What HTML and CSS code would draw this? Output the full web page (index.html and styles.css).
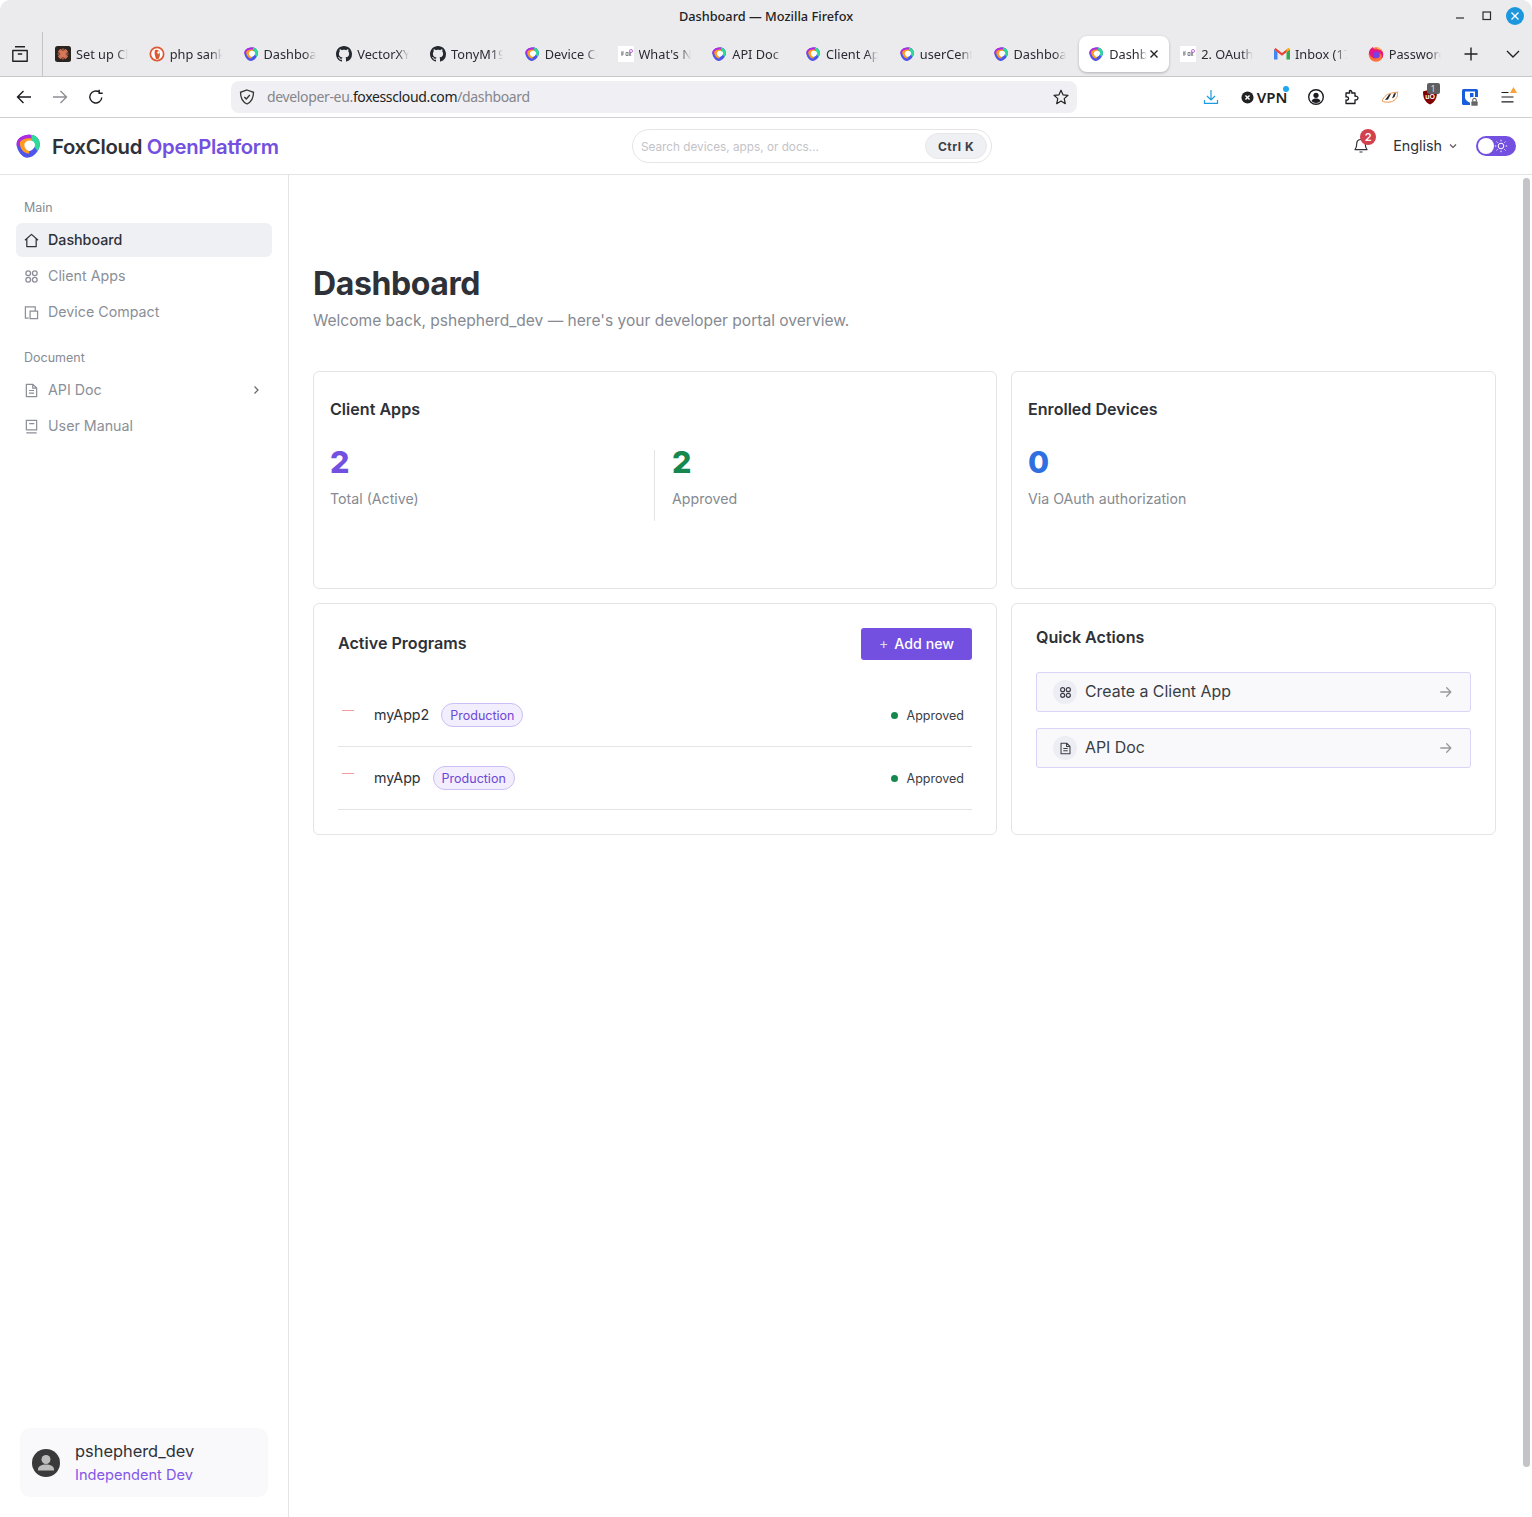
FILE: index.html
```html
<!DOCTYPE html>
<html lang="en">
<head>
  <meta charset="UTF-8">
  <meta name="viewport" content="width=device-width, initial-scale=1.0">
  <title>Dashboard</title>
  <link rel="stylesheet" href="styles.css">
</head>
<body>
  <svg class="sprite" aria-hidden="true">
    <symbol id="fox" viewBox="0 0 24 24">
      <path d="M12 .8C18.500 -.2 23.600 3.800 23.800 10 24 16.500 18 23.500 11.500 23.800 6 23.800 1.500 17 .6 11.500 0 6 5 1.800 12 .8Z" fill="#4f55ea"/>
      <path d="M1 12C-.5 6 4 1.700 12 .8 15 .4 18 1 20 3L17 7 7 5 3 12Z" fill="#b02be0"/>
      <path d="M15 .7C20 1 23.800 5 23.800 10 23.900 12 23 15 21.500 17L17 11Z" fill="#2fd99a"/>
      <path d="M4 8C6 5 11 3.500 16 4.500L13 19.500C8 20 3 14 4 8Z" fill="#ff9a1f"/>
      <path d="M13 6.500C16.500 6 19 8 19 10.800 19 14 16 17 13 17 10.500 16.500 8.500 14 8.300 11.300 8.200 8.800 10 7 13 6.500Z" fill="#fff"/>
    </symbol>
    <symbol id="github" viewBox="0 0 16 16">
      <path d="M8 0C3.580 0 0 3.580 0 8c0 3.540 2.290 6.530 5.470 7.590.4.070.55-.17.55-.38 0-.19-.01-.82-.01-1.490-2.010.37-2.530-.49-2.690-.94-.09-.23-.48-.94-.82-1.130-.28-.15-.68-.52-.01-.53.63-.01 1.080.58 1.230.82.72 1.210 1.870.87 2.330.66.070-.52.28-.87.51-1.070-1.780-.2-3.640-.89-3.640-3.950 0-.87.31-1.590.82-2.150-.08-.2-.36-1.020.08-2.120 0 0 .67-.21 2.200.82.64-.18 1.320-.27 2-.27.68 0 1.360.09 2 .27 1.530-1.040 2.200-.82 2.200-.82.44 1.100.16 1.920.08 2.120.51.56.82 1.270.82 2.150 0 3.070-1.870 3.750-3.650 3.950.29.25.54.73.54 1.480 0 1.070-.01 1.930-.01 2.200 0 .21.15.46.55.38A8.013 8.013 0 0016 8c0-4.420-3.580-8-8-8z" fill="#24292f"/>
    </symbol>
    <symbol id="foxdoc" viewBox="0 0 16 16">
      <rect width="16" height="16" fill="#fff"/>
      <path d="M3 8h3M3 6h3M4 6v4M8 6.500h2v3H8zM11 6l2 4M13 6l-2 4" stroke="#6a6a78" stroke-width=".8" fill="none"/>
      <circle cx="13" cy="5" r="1.500" fill="none" stroke="#b04bc8" stroke-width=".8"/>
    </symbol>
    <symbol id="apps" viewBox="0 0 16 16">
      <g fill="none" stroke="currentColor" stroke-width="1.400">
        <circle cx="4.500" cy="4.500" r="2.500"/><circle cx="11.500" cy="4.500" r="2.500"/>
        <circle cx="4.500" cy="11.500" r="2.500"/><circle cx="11.500" cy="11.500" r="2.500"/>
      </g>
    </symbol>
    <symbol id="doc" viewBox="0 0 16 16">
      <path d="M2.500 1.500h7L13.500 5.300v9.200h-11zM9.300 2v3.500h4M5.300 8h5.400M5.300 10.800h5.400" fill="none" stroke="currentColor" stroke-width="1.300" stroke-linejoin="round"/>
    </symbol>
    <symbol id="arrow" viewBox="0 0 16 16">
      <path d="M2 8h11.500M8.800 3.200 13.500 8 8.800 12.800" fill="none" stroke="currentColor" stroke-width="1.500" stroke-linecap="round" stroke-linejoin="round"/>
    </symbol>
  </svg>

  <div class="browser">
    <div class="titlebar">
      <span></span>
      <span class="window-title">Dashboard — Mozilla Firefox</span>
      <div class="window-controls">
        <svg class="ctl" viewBox="0 0 12 12"><path d="M1 8h8" stroke="#2b2b2b" stroke-width="1.200"/></svg>
        <svg class="ctl" viewBox="0 0 12 12"><rect x="2" y="2" width="7.500" height="7.500" fill="none" stroke="#2b2b2b" stroke-width="1.200"/></svg>
        <span class="ctl-close"><svg viewBox="0 0 12 12"><path d="M2.500 2.500l7 7M9.500 2.500l-7 7" stroke="#fff" stroke-width="1.400"/></svg></span>
      </div>
    </div>

    <div class="tabbar">
      <div class="tab-menu">
        <svg width="18" height="18" viewBox="0 0 18 18"><path d="M4 1.800h10M1.800 5.500h14.400v10.700H1.800zM6.800 9h4.400" fill="none" stroke="#222" stroke-width="1.400" stroke-linejoin="round"/></svg>
      </div>
      <div class="tabs">
        <div class="tab">
          <svg class="fav" viewBox="0 0 16 16"><rect width="16" height="16" rx="2.500" fill="#2b2320"/><path d="M8 2.500v11M2.500 8h11M4 4l8 8M12 4l-8 8M5.500 3l5 10M10.500 3l-5 10M3 5.500l10 5M13 5.500l-10 5" stroke="#d97757" stroke-width="1.200"/></svg>
          <span class="tab-label">Set up Claude</span>
        </div>
        <div class="tab">
          <svg class="fav" viewBox="0 0 16 16"><circle cx="8" cy="8" r="7.500" fill="#de5833"/><circle cx="8" cy="8" r="5.800" fill="#fff"/><path d="M6 4c3-1 5 1 5 4 0 2-1 4-1.500 5H7C6 10 5 7 6 4Z" fill="#de5833"/><circle cx="9.500" cy="6.500" r="1.200" fill="#fff"/><path d="M8 9l3-.8v1.400z" fill="#5cb85c"/></svg>
          <span class="tab-label">php sankey</span>
        </div>
        <div class="tab"><svg class="fav fav-fox"><use href="#fox"/></svg><span class="tab-label">Dashboard</span></div>
        <div class="tab"><svg class="fav"><use href="#github"/></svg><span class="tab-label">VectorXY</span></div>
        <div class="tab"><svg class="fav"><use href="#github"/></svg><span class="tab-label">TonyM19</span></div>
        <div class="tab"><svg class="fav fav-fox"><use href="#fox"/></svg><span class="tab-label">Device Compact</span></div>
        <div class="tab"><svg class="fav"><use href="#foxdoc"/></svg><span class="tab-label">What's New</span></div>
        <div class="tab"><svg class="fav fav-fox"><use href="#fox"/></svg><span class="tab-label">API Doc</span></div>
        <div class="tab"><svg class="fav fav-fox"><use href="#fox"/></svg><span class="tab-label">Client Apps</span></div>
        <div class="tab"><svg class="fav fav-fox"><use href="#fox"/></svg><span class="tab-label">userCenter</span></div>
        <div class="tab"><svg class="fav fav-fox"><use href="#fox"/></svg><span class="tab-label">Dashboard</span></div>
        <div class="tab tab-active">
          <svg class="fav fav-fox"><use href="#fox"/></svg>
          <span class="tab-label">Dashboard</span>
          <svg class="tab-close" viewBox="0 0 10 10"><path d="M1.500 1.500l7 7M8.500 1.500l-7 7" stroke="#222" stroke-width="1.400"/></svg>
        </div>
        <div class="tab"><svg class="fav"><use href="#foxdoc"/></svg><span class="tab-label">2. OAuth</span></div>
        <div class="tab">
          <svg class="fav" viewBox="0 0 16 16"><path d="M0 13.500V3.500l3.500 2.500V13.500z" fill="#4285f4"/><path d="M16 13.500V3.500L12.500 6V13.500z" fill="#34a853"/><path d="M0 3.500 1.500 2 8 7 14.500 2 16 3.500 8 9.800z" fill="#ea4335"/><path d="M12.500 6 16 3.500 14.500 2 12.500 3.500z" fill="#fbbc04"/></svg>
          <span class="tab-label">Inbox (17)</span>
        </div>
        <div class="tab">
          <svg class="fav" viewBox="0 0 16 16"><circle cx="8" cy="8.500" r="7.300" fill="#ff7139"/><path d="M1 7c0-3 2-5 4-6 0 1 .5 2 2 2.500C10 3 13 4 14.500 6c1 2 1 5-1 7C15 9 12 6 9 7 6 8 5 11 8 12.500 5 12.500 2 10.500 1 7Z" fill="#e31587"/><circle cx="8.500" cy="9" r="3.300" fill="#7542e5"/><path d="M10 1c1.500 1 3 2.200 4 4-2-1.500-3.500-2-5-2z" fill="#ffbd4f"/></svg>
          <span class="tab-label">Passwords</span>
        </div>
      </div>
      <div class="tab-tools">
        <svg width="14" height="14" viewBox="0 0 14 14"><path d="M7 .5v13M.5 7h13" stroke="#222" stroke-width="1.400"/></svg>
        <svg width="14" height="14" viewBox="0 0 14 14"><path d="M1 4l6 6 6-6" fill="none" stroke="#222" stroke-width="1.400"/></svg>
      </div>
    </div>

    <div class="navbar">
      <div class="nav-btns">
        <span class="nav-btn"><svg viewBox="0 0 16 16"><path d="M15 8H1.500M7.500 2 1.500 8l6 6" fill="none" stroke="#1c1b22" stroke-width="1.400"/></svg></span>
        <span class="nav-btn"><svg viewBox="0 0 16 16"><path d="M1 8h13.500M8.500 2l6 6-6 6" fill="none" stroke="#8f8f94" stroke-width="1.400"/></svg></span>
        <span class="nav-btn"><svg viewBox="0 0 16 16"><path d="M13.800 8.500A6 6 0 1 1 11.500 3.200M11.200.8v3.500h3.500" fill="none" stroke="#1c1b22" stroke-width="1.400"/></svg></span>
      </div>
      <div class="urlbar">
        <svg class="url-shield" viewBox="0 0 16 16"><path d="M8 1 14.500 3.300c0 5-1.500 9.500-6.500 11.700C3 12.800 1.500 8.300 1.500 3.300Z" fill="none" stroke="#333" stroke-width="1.300"/><path d="M5.300 8 7.300 10 10.800 6" fill="none" stroke="#333" stroke-width="1.300"/></svg>
        <span class="url"><span class="url-dim">developer-eu.</span>foxesscloud.com<span class="url-dim">/dashboard</span></span>
        <svg class="url-star" viewBox="0 0 16 16"><path d="M8 1.200 10 5.800 15 6.300 11.200 9.600 12.300 14.700 8 12 3.700 14.700 4.800 9.600 1 6.300 6 5.800Z" fill="none" stroke="#222" stroke-width="1.200" stroke-linejoin="round"/></svg>
      </div>
      <div class="nav-tools">
        <svg class="tool" viewBox="0 0 16 16"><path d="M8 1v9.500M4 7l4 4 4-4M1.500 11v3.300h13V11" fill="none" stroke="#1e9ae0" stroke-width="1.200"/></svg>
        <span class="vpn">
          <svg viewBox="0 0 14 14"><circle cx="7" cy="7" r="6.500" fill="#222"/><path d="M4.800 4.800l4.400 4.400M9.200 4.800 4.800 9.200" stroke="#fff" stroke-width="1.500"/></svg>
          <b>VPN</b><i></i>
        </span>
        <svg class="tool" viewBox="0 0 16 16"><circle cx="8" cy="8" r="7.300" fill="none" stroke="#1c1b22" stroke-width="1.400"/><circle cx="8" cy="6.300" r="2.600" fill="#1c1b22"/><path d="M3.500 12c1-2 2.800-2.500 4.500-2.500s3.500.5 4.500 2.500c-1 1.200-2.800 2-4.500 2s-3.500-.8-4.500-2Z" fill="#1c1b22"/></svg>
        <svg class="tool" viewBox="0 0 16 16"><path d="M6 1.500c1.500 0 2 1 1.800 2.500H11v3.300c1.500-.3 3 .3 3 1.800s-1.500 2-3 1.700v3.700H2V11c1.500.5 2.500-.2 2.500-1.500S3.500 7.500 2 8V4h3.800C5.500 3 5 1.500 6 1.500Z" fill="none" stroke="#1c1b22" stroke-width="1.300" stroke-linejoin="round"/></svg>
        <svg class="tool" viewBox="0 0 16 16"><path d="M0 12C2 7 6 4.500 10 4L16 3 15.500 6.500C15 9.500 12 12.500 8 13 5 13.500 2 13 0 12Z" fill="#fff" stroke="#e8893a" stroke-width=".9"/><path d="M3 11 7 5.500 9 4.800 6 10.500ZM10 9.500 12 4.500 14 4 12.500 8Z" fill="#222"/></svg>
        <span class="ublock">
          <svg viewBox="0 0 16 16"><path d="M8 .5 15 2.500c0 6-1.500 10.500-7 13C2.500 13 1 8.500 1 2.500Z" fill="#800000"/><text x="8" y="10" text-anchor="middle">uO</text></svg>
          <em>1</em>
        </span>
        <span class="bitwarden">
          <svg viewBox="0 0 16 16"><rect width="16" height="16" rx="1.500" fill="#175ddc"/><path d="M3 2.500h10v6c0 2.500-2.500 4-5 5.200-2.500-1.200-5-2.700-5-5.200z" fill="#fff"/><path d="M8 4h3.500v4.500c0 1.500-1.800 2.800-3.500 3.500z" fill="#175ddc"/></svg>
          <svg class="bw-lock" viewBox="0 0 10 10"><rect width="10" height="10" rx="1.500" fill="#fff"/><path d="M3 5V3.500a2 2 0 0 1 4 0V5" fill="none" stroke="#666" stroke-width="1.200"/><rect x="1.500" y="4.800" width="7" height="5" rx="1" fill="#666"/></svg>
        </span>
        <span class="menu-btn">
          <svg viewBox="0 0 16 16"><path d="M1.500 3.500h7M1.500 8h12M1.500 12.800h12" stroke="#1c1b22" stroke-width="1.200"/><path d="M13.500 -2 17 4H10Z" fill="#f6a33a"/></svg>
        </span>
      </div>
    </div>
  </div>

  <header class="app-header">
    <div class="brand">
      <svg class="brand-logo"><use href="#fox"/></svg>
      <span class="brand-name">FoxCloud <span class="brand-accent">OpenPlatform</span></span>
    </div>
    <div class="search">
      <span class="search-text">Search devices, apps, or docs...</span>
      <span class="search-key">Ctrl K</span>
    </div>
    <div class="header-right">
      <span class="bell">
        <svg viewBox="0 0 16 16"><path d="M8 1.500c-2.800 0-4.300 2-4.300 4.500 0 3-.7 4.500-1.700 5.700h12c-1-1.200-1.700-2.700-1.700-5.700 0-2.500-1.500-4.500-4.300-4.500ZM6.500 14h3" fill="none" stroke="#2e3138" stroke-width="1.200" stroke-linejoin="round"/></svg>
        <span class="bell-count">2</span>
      </span>
      <span class="lang">English</span>
      <svg class="lang-caret" viewBox="0 0 10 10"><path d="M2 3.500 5 6.500 8 3.500" fill="none" stroke="#555" stroke-width="1.100"/></svg>
      <span class="toggle">
        <span class="toggle-knob"></span>
        <svg class="toggle-sun" viewBox="0 0 14 14"><circle cx="7" cy="7" r="2.800" fill="none" stroke="#fff" stroke-width="1"/><path d="M7 .8v1.500M7 11.700v1.500M.8 7h1.500M11.700 7h1.500M2.600 2.600l1 1M10.400 10.400l1 1M2.600 11.400l1-1M10.400 3.600l1-1" stroke="#fff" stroke-width="1"/></svg>
      </span>
    </div>
  </header>

  <div class="app-body">
    <aside class="sidebar">
      <nav>
        <div class="side-label">Main</div>
        <a class="side-item side-item-active">
          <svg viewBox="0 0 16 16"><path d="M1 7.800 8 1.500l7 6.300M3 6.300v8.200h10V6.300" fill="none" stroke="currentColor" stroke-width="1.300" stroke-linejoin="round"/></svg>
          <span class="side-text">Dashboard</span>
        </a>
        <a class="side-item"><svg><use href="#apps"/></svg><span class="side-text">Client Apps</span></a>
        <a class="side-item">
          <svg viewBox="0 0 16 16"><path d="M5 14H1.500V2H12v4M6.500 6.500H14.500V14.500H6.500z" fill="none" stroke="currentColor" stroke-width="1.300"/></svg>
          <span class="side-text">Device Compact</span>
        </a>
        <div class="side-label side-label-gap">Document</div>
        <a class="side-item">
          <svg><use href="#doc"/></svg><span class="side-text">API Doc</span>
          <svg class="side-caret" viewBox="0 0 10 10"><path d="M3.500 1.500 7 5 3.500 8.500" fill="none" stroke="#666" stroke-width="1.200"/></svg>
        </a>
        <a class="side-item">
          <svg viewBox="0 0 16 16"><path d="M2.500 12V1.500h11v10H2.800M2.500 14.800H13.500M5.500 5h5.500" fill="none" stroke="currentColor" stroke-width="1.300"/></svg>
          <span class="side-text">User Manual</span>
        </a>
      </nav>
      <div class="user-card">
        <svg class="avatar" viewBox="0 0 28 28"><circle cx="14" cy="14" r="14" fill="#3a3a3a"/><circle cx="14" cy="10.500" r="4.500" fill="#bdbdbd"/><path d="M6 20.500c0-3.500 3.500-5 8-5s8 1.500 8 5v1H6Z" fill="#bdbdbd"/></svg>
        <div>
          <div class="user-name">pshepherd_dev</div>
          <div class="user-role">Independent Dev</div>
        </div>
      </div>
    </aside>

    <main class="main">
      <h1>Dashboard</h1>
      <p class="subtitle">Welcome back, pshepherd_dev — here's your developer portal overview.</p>

      <div class="grid">
        <section class="card card-stats">
          <h2>Client Apps</h2>
          <div class="stats">
            <div class="stat">
              <div class="stat-num num-purple">2</div>
              <div class="stat-label">Total (Active)</div>
            </div>
            <div class="stat stat-split">
              <div class="stat-num num-green">2</div>
              <div class="stat-label">Approved</div>
            </div>
          </div>
        </section>

        <section class="card card-stats">
          <h2>Enrolled Devices</h2>
          <div class="stats">
            <div class="stat">
              <div class="stat-num num-blue">0</div>
              <div class="stat-label">Via OAuth authorization</div>
            </div>
          </div>
        </section>

        <section class="card card-wide">
          <div class="programs-head">
            <h2>Active Programs</h2>
            <button class="add-btn"><span class="add-plus">+</span>Add new</button>
          </div>
          <div class="program">
            <span class="program-icon"></span>
            <span class="program-name">myApp2</span>
            <span class="pill">Production</span>
            <span class="status">Approved</span>
          </div>
          <div class="program">
            <span class="program-icon"></span>
            <span class="program-name">myApp</span>
            <span class="pill">Production</span>
            <span class="status">Approved</span>
          </div>
        </section>

        <section class="card card-wide">
          <h2 class="actions-title">Quick Actions</h2>
          <a class="action">
            <span class="action-icon"><svg><use href="#apps"/></svg></span>
            <span class="action-text">Create a Client App</span>
            <svg class="action-arrow"><use href="#arrow"/></svg>
          </a>
          <a class="action">
            <span class="action-icon"><svg><use href="#doc"/></svg></span>
            <span class="action-text">API Doc</span>
            <svg class="action-arrow"><use href="#arrow"/></svg>
          </a>
        </section>
      </div>
      <div class="scrollbar"></div>
    </main>
  </div>
</body>
</html>
```

FILE: styles.css
```css
* {
  box-sizing: border-box;
}
html, body {
  height: 100%;
}
body {
  margin: 0;
  height: 1517px;
  overflow: hidden;
  display: flex;
  flex-direction: column;
  font-family: Inter, "Liberation Sans", sans-serif;
  color: #2e3138;
  background: #fff;
}
.sprite {
  display: block;
  width: 0;
  height: 0;
}

/* browser chrome */
.browser {
  font-family: "Noto Sans", "Open Sans", sans-serif;
  color: #15141a;
  flex: none;
}
.titlebar {
  height: 32px;
  background: #ebebee;
  border-radius: 10px 10px 0 0;
  display: grid;
  grid-template-columns: 1fr auto 1fr;
  align-items: center;
}
.window-title {
  font-size: 12.750px;
  font-weight: 500;
  color: #222;
}
.window-controls {
  display: flex;
  justify-content: flex-end;
  align-items: center;
  padding-right: 8px;
}
.ctl {
  width: 12px;
  height: 12px;
  margin-right: 14px;
}
.ctl-close {
  width: 18px;
  height: 18px;
  margin-left: -1px;
  border-radius: 50%;
  background: #1c96dc;
  display: flex;
  align-items: center;
  justify-content: center;
}
.ctl-close svg {
  width: 12px;
  height: 12px;
}
.tabbar {
  height: 45px;
  background: #ebebee;
  border-bottom: 1px solid #c8c8cc;
  display: flex;
}
.tab-menu {
  width: 43px;
  height: 44px;
  padding-left: 11px;
  display: flex;
  align-items: center;
  border-right: 1px solid #c4c4c8;
  margin-right: 3px;
}
.tabs {
  display: flex;
  width: 1406px;
}
.tab {
  width: 93.75px;
  height: 44px;
  padding-left: 9px;
  display: flex;
  align-items: center;
  gap: 5px;
  flex: none;
}
.fav {
  width: 16px;
  height: 16px;
  flex: none;
}
.fav-fox {
  width: 14px;
  height: 14px;
  margin: 0 1px;
}
.tab-label {
  width: 52px;
  overflow: hidden;
  white-space: nowrap;
  font-size: 12.750px;
  color: #2b2a33;
  -webkit-mask-image: linear-gradient(to right, #000 78%, transparent);
  mask-image: linear-gradient(to right, #000 78%, transparent);
}
.tab-active {
  width: 90px;
  height: 36px;
  margin: 4px 2px 0;
  padding-left: 9px;
  background: #fff;
  border-radius: 8px;
  box-shadow: 0 1px 3px rgba(0,0,0,0.25);
}
.tab-active .tab-label {
  width: 38px;
}
.tab-close {
  width: 10px;
  height: 10px;
  margin-left: -3px;
}
.tab-tools {
  flex: 1;
  display: flex;
  align-items: center;
  height: 44px;
  gap: 28px;
  padding-left: 12px;
}
.navbar {
  height: 41px;
  background: #fff;
  border-bottom: 1px solid #cfcfd3;
  display: flex;
  align-items: center;
}
.nav-btns {
  display: flex;
  padding-left: 6px;
  width: 231px;
}
.nav-btn {
  width: 36px;
  height: 32px;
  display: flex;
  align-items: center;
  justify-content: center;
}
.nav-btn svg {
  width: 16px;
  height: 16px;
}
.urlbar {
  width: 846px;
  height: 32px;
  margin-top: -1px;
  background: #f0f0f4;
  border-radius: 8px;
  display: flex;
  align-items: center;
  padding: 0 8px;
}
.url-shield {
  width: 16px;
  height: 16px;
  flex: none;
}
.url {
  margin-left: 12px;
  font-size: 14px;
  letter-spacing: -0.35px;
  flex: 1;
  color: #222;
}
.url-dim {
  color: #85858b;
}
.url-star {
  width: 16px;
  height: 16px;
}
.nav-tools {
  display: grid;
  grid-template-columns: 36px 70px 34px 38px 38px 41px 39px 38px;
  margin-left: 116px;
  justify-items: center;
  align-items: center;
}
.tool {
  width: 16px;
  height: 16px;
}
.vpn {
  display: flex;
  align-items: center;
  gap: 3px;
  position: relative;
}
.vpn svg {
  width: 13px;
  height: 13px;
}
.vpn b {
  font-size: 15px;
  font-weight: 600;
  color: #222;
}
.vpn i {
  position: absolute;
  right: -2px;
  top: -1px;
  width: 6px;
  height: 6px;
  border-radius: 50%;
  background: #1ea7f0;
}
.ublock, .bitwarden, .menu-btn {
  position: relative;
  width: 16px;
  height: 16px;
  display: block;
}
.ublock svg, .bitwarden svg, .menu-btn svg {
  width: 16px;
  height: 16px;
  display: block;
  overflow: visible;
}
.ublock text {
  font-family: "Liberation Sans", sans-serif;
  font-size: 7px;
  font-weight: 700;
  fill: #fff;
}
.ublock em {
  position: absolute;
  left: 5px;
  top: -6px;
  width: 13px;
  height: 11px;
  background: #5f5f5f;
  border-radius: 2px;
  color: #ddd;
  font-size: 9px;
  font-style: normal;
  line-height: 11px;
  text-align: center;
}
.bitwarden .bw-lock {
  position: absolute;
  right: -1px;
  bottom: -1px;
  width: 9px;
  height: 9px;
}

/* app header */
.app-header {
  height: 57px;
  flex: none;
  border-bottom: 1px solid #e4e4e7;
  display: flex;
  align-items: center;
}
.brand {
  width: 632px;
  padding-left: 16px;
  display: flex;
  align-items: center;
}
.brand-logo {
  width: 24px;
  height: 24px;
  margin-right: 12px;
}
.brand-name {
  font-size: 20.300px;
  font-weight: 600;
  color: #2e3138;
  letter-spacing: -0.3px;
}
.brand-accent {
  color: #7350e0;
}
.search {
  width: 360px;
  height: 34px;
  border: 1px solid #e5e5e8;
  border-radius: 17px;
  display: flex;
  align-items: center;
  justify-content: space-between;
  padding: 0 4px 0 8px;
}
.search-text {
  font-size: 11.750px;
  padding-top: 1px;
  color: #c3c3c8;
}
.search-key {
  width: 62px;
  height: 26px;
  border: 1px solid #e8e8ec;
  background: #eff0f4;
  border-radius: 13px;
  font-size: 12px;
  font-weight: 700;
  letter-spacing: 0.5px;
  line-height: 25px;
  text-align: center;
  color: #3c3f46;
}
.header-right {
  flex: 1;
  display: flex;
  align-items: center;
  justify-content: flex-end;
  padding-right: 16px;
}
.bell {
  position: relative;
  width: 16px;
  height: 16px;
  margin-right: 24px;
}
.bell svg {
  width: 16px;
  height: 16px;
  display: block;
}
.bell-count {
  position: absolute;
  left: 7px;
  top: -9px;
  width: 16px;
  height: 16px;
  border-radius: 50%;
  background: #d1424e;
  color: #fff;
  font-size: 11px;
  font-weight: 600;
  line-height: 16px;
  text-align: center;
}
.lang {
  font-size: 14.300px;
  padding-bottom: 1px;
  color: #2e3138;
}
.lang-caret {
  width: 10px;
  height: 10px;
  margin: 0 18px 0 6px;
}
.toggle {
  position: relative;
  width: 40px;
  height: 20px;
  border-radius: 10px;
  background: #7350e0;
}
.toggle-knob {
  position: absolute;
  left: 2px;
  top: 2px;
  width: 16px;
  height: 16px;
  border-radius: 50%;
  background: #fff;
}
.toggle-sun {
  position: absolute;
  right: 8px;
  top: 3px;
  width: 14px;
  height: 14px;
}

/* layout */
.app-body {
  flex: 1;
  display: flex;
  min-height: 0;
}
.sidebar {
  width: 289px;
  flex: none;
  border-right: 1px solid #e4e4e7;
  padding: 24px 16px 20px;
  display: flex;
  flex-direction: column;
  justify-content: space-between;
}
.side-label {
  font-size: 12.500px;
  line-height: 18px;
  color: #878b93;
  padding-left: 8px;
  margin-bottom: 6px;
}
.side-label-gap {
  margin-top: 20px;
}
.side-item {
  height: 34px;
  margin-bottom: 2px;
  padding: 0 8px;
  border-radius: 6px;
  display: flex;
  align-items: center;
  gap: 9px;
  font-size: 14.250px;
  color: #8b8f97;
}
.side-text {
  padding-bottom: 2px;
}
.side-item svg {
  width: 15px;
  height: 15px;
  flex: none;
}
.side-item .side-caret {
  width: 10px;
  height: 10px;
  margin-left: auto;
  margin-right: 3px;
}
.side-item-active {
  background: #eff0f4;
  color: #2e3138;
  font-weight: 500;
}
.user-card {
  margin: 0 4px;
  height: 69px;
  border-radius: 10px;
  background: #f9f9fc;
  padding: 0 12px;
  display: flex;
  align-items: center;
  gap: 15px;
}
.avatar {
  width: 28px;
  height: 28px;
  flex: none;
}
.user-name {
  font-size: 16.400px;
  line-height: 23px;
  color: #2e3138;
}
.user-role {
  margin-top: 1px;
  font-size: 14.600px;
  line-height: 22px;
  color: #8257e6;
}

/* main */
.main {
  position: relative;
  flex: 1;
  padding: 89px 36px 0 24px;
}
h1 {
  margin: 0;
  font-size: 32px;
  line-height: 40px;
  font-weight: 700;
  letter-spacing: -0.4px;
  color: #2e3138;
}
.subtitle {
  margin: 5px 0 38px;
  font-size: 15.550px;
  line-height: 24px;
  color: #868a92;
}
.grid {
  display: grid;
  grid-template-columns: 684px 1fr;
  gap: 14px;
}
.card {
  border: 1px solid #e4e4e7;
  border-radius: 6px;
  background: #fff;
}
.card-stats {
  height: 218px;
  padding: 23px 16px;
}
.card-wide {
  height: 232px;
  padding: 24px;
}
h2 {
  margin: 0;
  font-size: 16.100px;
  line-height: 28px;
  font-weight: 600;
  color: #2e3138;
}
.stats {
  display: grid;
  grid-template-columns: 1fr 1fr;
  padding-right: 2px;
  margin-top: 27px;
}
.stat {
  height: 71px;
  white-space: nowrap;
}
.stat-split {
  border-left: 1px solid #e4e4e7;
  padding-left: 17px;
}
.stat-num {
  font-size: 30.500px;
  line-height: 23px;
  font-weight: 800;
}
.num-purple {
  color: #7350e0;
}
.num-green {
  color: #16874f;
}
.num-blue {
  color: #2f6fe0;
}
.stat-label {
  margin-top: 15px;
  font-size: 14.200px;
  line-height: 22px;
  color: #868a92;
}
.programs-head {
  height: 32px;
  margin-bottom: 24px;
  display: flex;
  align-items: center;
  justify-content: space-between;
}
.programs-head h2 {
  margin-top: -2px;
}
.add-btn {
  width: 111px;
  height: 32px;
  border: none;
  border-radius: 3px;
  padding: 0 0 2px;
  background: #7350e0;
  color: #fff;
  font-family: inherit;
  font-size: 14.200px;
  font-weight: 500;
}
.add-plus {
  margin-right: 6px;
  font-weight: 400;
  color: #ddd;
}
.program {
  height: 63px;
  border-bottom: 1px solid #e4e4e7;
  display: flex;
  align-items: center;
}
.program-icon {
  width: 12px;
  height: 1px;
  margin: -9px 20px 0 4px;
  background: #f29c9c;
}
.program-name {
  font-size: 14.250px;
  padding-bottom: 1px;
  color: #2e3138;
  margin-right: 12px;
}
.pill {
  height: 24px;
  padding: 0 8px;
  border: 1px solid #cbbff5;
  border-radius: 12px;
  background: #f2eefd;
  color: #6d47d6;
  font-size: 12.500px;
  line-height: 23px;
}
.status {
  margin-left: auto;
  padding-right: 8px;
  font-size: 12.500px;
  color: #3a3d44;
  display: flex;
  align-items: center;
  gap: 9px;
}
.status::before {
  content: "";
  width: 7px;
  height: 7px;
  border-radius: 50%;
  background: #16874f;
}
.actions-title {
  line-height: 18px;
  margin-bottom: 26px;
}
.action {
  height: 40px;
  margin-bottom: 16px;
  padding: 0 17px 0 16px;
  border: 1px solid #dad5f8;
  border-radius: 3px;
  background: #f9f9fc;
  display: flex;
  align-items: center;
}
.action-icon {
  width: 24px;
  height: 24px;
  border-radius: 50%;
  background: #eceef3;
  color: #3a3d44;
  display: flex;
  align-items: center;
  justify-content: center;
  margin-right: 8px;
}
.action-icon svg {
  width: 13px;
  height: 13px;
}
.action-text {
  font-size: 15.900px;
  padding-bottom: 1px;
  flex: 1;
  color: #3a3d44;
}
.action-arrow {
  width: 14px;
  height: 14px;
  color: #999;
}
.scrollbar {
  position: absolute;
  right: 2px;
  top: 3px;
  width: 7px;
  height: 1289px;
  border-radius: 4px;
  background: #c4c4c6;
}
```
